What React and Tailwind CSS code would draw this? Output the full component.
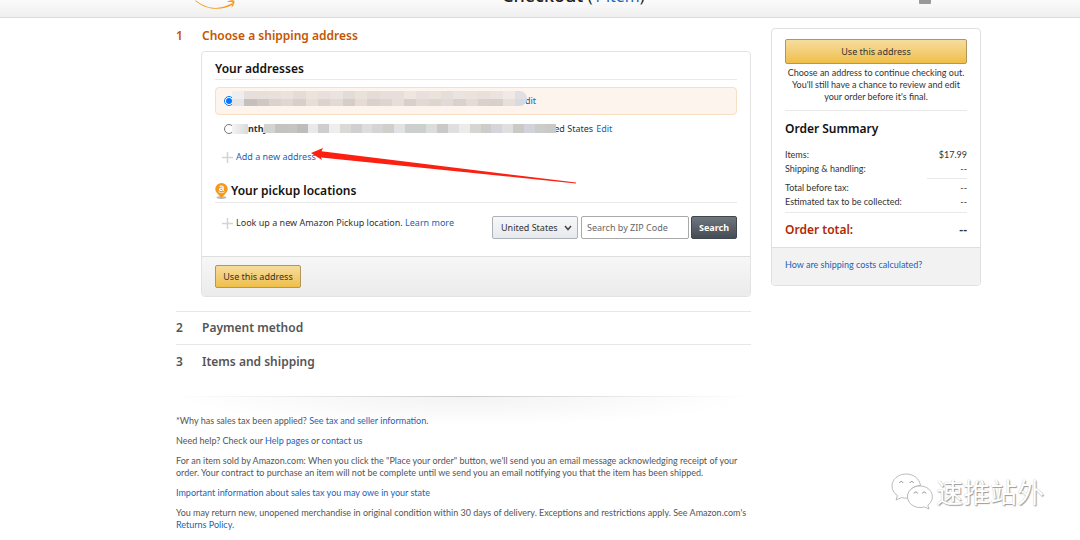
import React, { useState } from 'react';

const selectedMask = [
  ['#efeeee', '#e6dfdb', '#e6dfda', '#e7e0db', '#ebe2dd', '#e4dcd7', '#ece3dd', '#e8e0dc', '#eae3df', '#e2dcd9', '#e9e2db', '#e4dcd7', '#e8dfda', '#e6dfdc', '#efe7df', '#e7e0dc', '#e9e3dc', '#e5deda', '#e9e4dd', '#ece2dd', '#e7e1da', '#eae3df', '#f0e9e4', '#e0e0e4'],
  ['#e5e5e7', '#c6c0bd', '#cfc7c4', '#dbd2cd', '#e0d7d1', '#d8cecb', '#e7ded8', '#ddd2ce', '#e3dad4', '#d6cdc9', '#e6dcd5', '#dad1cc', '#ded4d0', '#e7ded8', '#d9cfcb', '#e2d8d4', '#ddd6cf', '#e2dad6', '#dad0cd', '#e3dbd4', '#dcd0cd', '#d8d0cd', '#e8dfda', '#d9dae0'],
];

const otherMask = [
  ['#d3d3d2', '#c3c3c0', '#c4c5c1', '#bdbdbb', '#e9e9e9', '#cdcecd', '#eeeeee', '#dad9d6', '#d0cfd1', '#dddddb', '#d4d5d7', '#cfcfcb', '#e2e1e3', '#cbd0cd', '#cad0cc', '#dbdddd', '#c9c9c8', '#dfdfe0', '#ebebeb', '#d5d5d2', '#cccdc9', '#d4d4da', '#dfdfdf', '#c9cac5', '#d2d3da', '#cacdca', '#c8cac8'],
];

function Mosaic({ rows, className }) {
  return (
    <div aria-hidden="true" className={`flex flex-col overflow-hidden ${className}`}>
      {rows.map((row, i) => (
        <div key={i} className="flex flex-1">
          {row.map((color, j) => (
            <span key={j} className="flex-1" style={{ backgroundColor: color }} />
          ))}
        </div>
      ))}
    </div>
  );
}

function Link({ children, className = '' }) {
  return (
    <a href="#" className={`text-[#2162b8] hover:underline ${className}`}>{children}</a>
  );
}

function PlusIcon() {
  return (
    <svg viewBox="0 0 11 11" className="w-[11px] h-[11px] shrink-0" fill="none" stroke="#d4d4d4" strokeWidth="1.5">
      <path d="M5.5 0v11M0 5.5h11" />
    </svg>
  );
}

function PinIcon() {
  return (
    <svg viewBox="0 0 13 16" className="w-[13px] h-4 shrink-0">
      <ellipse cx="6.5" cy="14.6" rx="5" ry="1.3" fill="#b9b9b9" />
      <path d="M6.500 0A6.200 6.200 0 0 0 .3 6.200C.3 9.500 4 11.500 6.500 15.200 9 11.500 12.700 9.500 12.700 6.200A6.200 6.200 0 0 0 6.500 0z" fill="#f39a1e" />
      <path d="M4.700 3.700c.5-1 3.500-1.200 3.500.5v2.500c0 .5.3.7.5.9M8.200 5.100C6 5 4.500 5.400 4.500 6.500c0 1.500 3 1.400 3.700-.4" fill="none" stroke="#fff" strokeWidth="1.1" />
      <path d="M3.300 8.700c2 1.400 4.500 1.300 6.400.1" fill="none" stroke="#fff" strokeWidth=".7" />
    </svg>
  );
}

function GoldButton({ className = '' }) {
  return (
    <button
      type="button"
      className={`rounded-[2px] border border-[#b3965a] bg-linear-to-b from-[#f6dc9d] to-[#efbf46] font-['Noto_Sans',sans-serif] text-[9px] text-[#333] ${className}`}
    >
      Use this address
    </button>
  );
}

function Header() {
  return (
    <header className="flex h-[18px] items-end overflow-hidden border-b border-[#dcdcdc] bg-linear-to-b from-[#fbfbfb] to-[#efefef] pl-[176px] pr-[99px]">
      <svg viewBox="0 0 42 12" className="ml-[19px] mb-2 h-3 w-[42px] shrink-0">
        <path d="M1 3.500C12 12.500 25 13 36.500 6.600c1-.5 1.800.5.9 1.200C27 14 11 13.200.7 4.200c-.5-.6-.2-1.100.3-.7z" fill="#f79b1c" />
        <path d="M32.500 4.500c2.500-1.400 6-1.600 6.700-.8.700.9-.2 4.500-2.300 6.500-.4.300-.7.100-.5-.3.500-1.300 1.500-3.800 1-4.400-.5-.6-3-.5-4.500-.4-.5 0-.7-.3-.4-.6z" fill="#f79b1c" />
      </svg>
      <h1 className="ml-[265px] mb-[9px] whitespace-nowrap text-[18px] font-medium leading-6 text-[#222]">
        Checkout <span className="text-[16px] font-normal">(<Link>1 item</Link>)</span>
      </h1>
      <span className="mb-[13px] ml-auto mr-[50px] h-3 w-3 rounded-[1px] bg-[#999]" />
    </header>
  );
}

function AddressPanel() {
  const [picked, setPicked] = useState('first');

  return (
    <section className="ml-[25px] mt-[6px] rounded-[4px] border border-[#e3e3e3]">
      <div className="px-[13px] pt-2">
        <h3 className="border-b border-[#e9e9e9] pb-[2px] text-[12px] font-semibold leading-[17px] text-[#111]">Your addresses</h3>

        <label className="mt-[7px] flex h-7 items-center rounded-[4px] border border-[#f8dfc4] bg-[#fcf4ed] pl-2 text-[9px]">
          <input
            type="radio"
            name="address"
            aria-label="First address"
            checked={picked === 'first'}
            onChange={() => setPicked('first')}
            className="h-[10px] w-[10px] shrink-0"
          />
          <Mosaic rows={selectedMask} className="relative z-10 -ml-[2px] -mr-[7px] mt-[3px] h-[15px] w-[295px] self-start rounded-r-lg" />
          <Link>Edit</Link>
        </label>

        <label className="flex h-[27px] items-center pl-[9px] text-[9px] text-[#333]">
          <input
            type="radio"
            name="address"
            aria-label="Second address"
            checked={picked === 'second'}
            onChange={() => setPicked('second')}
            className="h-[10px] w-[10px] shrink-0"
          />
          <span className="relative z-10 -ml-[2px] h-[10px] w-4 bg-linear-to-r from-[#f4f4f4] to-[#dadada]" />
          <span className="font-bold">nthj</span>
          <Mosaic rows={otherMask} className="relative z-10 -ml-[2px] -mr-[2px] h-[9px] w-[292px]" />
          <span className="mr-[3px]">ed States</span>
          <Link>Edit</Link>
        </label>

        <div className="relative mt-2 flex h-[14px] items-center gap-[3px] pl-[7px] text-[9px]">
          <PlusIcon />
          <Link>Add a new address</Link>
          <svg viewBox="0 0 266 40" className="pointer-events-none absolute left-[96px] -top-[2px] h-10 w-[266px]">
            <path d="M0 5 12 0 10.500 3.200 265 34.500 265 35.500 10 9.500 11 12z" fill="#fb2012" />
          </svg>
        </div>

        <h3 className="mt-[17px] flex items-center gap-[3px] border-b border-[#e9e9e9] pb-[2px] text-[12px] font-semibold leading-[19px] text-[#111]">
          <PinIcon />
          Your pickup locations
        </h3>

        <form onSubmit={e => e.preventDefault()} className="mt-[13px] flex h-[40px] items-start text-[9px] text-[#333]">
          <div className="flex h-[14px] items-center gap-[3px] pl-[7px]">
            <PlusIcon />
            <span>Look up a new Amazon Pickup location. <Link>Learn more</Link></span>
          </div>
          <div className="relative ml-auto">
            <select
              aria-label="Country"
              className="h-[23px] w-[86px] appearance-none rounded-[2px] border border-[#adb1b8] bg-linear-to-b from-[#f7f8fa] to-[#e7e9ec] pl-2 text-[9px] text-[#333]"
            >
              <option>United States</option>
            </select>
            <svg viewBox="0 0 8 6" className="pointer-events-none absolute right-[6px] top-[9px] h-[6px] w-2" fill="none" stroke="#444" strokeWidth="1.500">
              <path d="M1 1l3 3.500L7 1" />
            </svg>
          </div>
          <input
            type="text"
            aria-label="ZIP Code"
            placeholder="Search by ZIP Code"
            className="ml-[3px] h-[23px] w-[108px] rounded-[2px] border border-[#a9a9a9] bg-white px-[5px] text-[9px] placeholder:text-[#666]"
          />
          <button type="submit" className="ml-[2px] h-[23px] w-[46px] rounded-[2px] border border-[#40464e] bg-linear-to-b from-[#6f767e] to-[#444c55] text-[9px] font-bold text-white">
            Search
          </button>
        </form>
      </div>

      <div className="rounded-b-[4px] border-t border-[#dedede] bg-linear-to-b from-[#f7f7f7] to-[#ebebeb] px-[13px] py-2">
        <GoldButton className="block h-[23px] w-[86px]" />
      </div>
    </section>
  );
}

function Step({ number, title }) {
  return (
    <div className="flex h-[33px] items-center text-[12px] font-semibold text-[#555]">
      <span className="w-[26px]">{number}</span>
      <h2>{title}</h2>
    </div>
  );
}

function Legal() {
  return (
    <footer className="flex flex-col gap-2 pt-[18px] font-[Lato,sans-serif] text-[9px] leading-3 text-[#555]">
      <p>*Why has sales tax been applied? <Link>See tax and seller information.</Link></p>
      <p>Need help? Check our <Link>Help pages</Link> or <Link>contact us</Link></p>
      <p>
        For an item sold by Amazon.com: When you click the "Place your order" button, we'll send you an email message acknowledging receipt of your
        order. Your contract to purchase an item will not be complete until we send you an email notifying you that the item has been shipped.
      </p>
      <p><Link>Important information about sales tax you may owe in your state</Link></p>
      <p>
        You may return new, unopened merchandise in original condition within 30 days of delivery. Exceptions and restrictions apply. See Amazon.com's{' '}
        <Link>Returns Policy.</Link>
      </p>
    </footer>
  );
}

function Row({ label, value }) {
  return (
    <div className="flex h-[14px] items-center justify-between">
      <dt>{label}</dt>
      <dd>{value}</dd>
    </div>
  );
}

function OrderSummary() {
  return (
    <aside className="mt-[10px] w-[210px] shrink-0 rounded-[4px] border border-[#e0e0e0] font-[Lato,sans-serif] text-[9px] text-[#333]">
      <div className="px-[13px] pt-[10px]">
        <GoldButton className="block h-[25px] w-full" />
        <p className="mt-[3px] border-b border-[#e9e9e9] pb-[7px] text-center leading-3">
          Choose an address to continue checking out. You'll still have a chance to review and edit your order before it's final.
        </p>
        <h3 className="mt-[9px] font-['Noto_Sans',sans-serif] text-[12px] font-semibold leading-[18px] text-[#111]">Order Summary</h3>
        <dl className="mt-[10px]">
          <Row label="Items:" value="$17.99" />
          <Row label="Shipping & handling:" value="--" />
          <div className="my-[2px] ml-auto w-10 border-t border-[#e9e9e9]" />
          <Row label="Total before tax:" value="--" />
          <Row label="Estimated tax to be collected:" value="--" />
          <div className="mt-[3px] flex h-[35px] items-center justify-between border-t border-[#e9e9e9] font-['Noto_Sans',sans-serif] text-[12px] font-semibold">
            <dt className="text-[#b12704]">Order total:</dt>
            <dd>--</dd>
          </div>
        </dl>
      </div>
      <div className="flex h-[38px] items-center rounded-b-[4px] border-t border-[#dedede] bg-[#f2f2f2] px-[13px] pb-1">
        <Link>How are shipping costs calculated?</Link>
      </div>
    </aside>
  );
}

function Watermark() {
  return (
    <div className="pointer-events-none absolute right-[36px] top-[473px] flex items-center gap-[3px]">
      <svg viewBox="0 0 42 38" className="h-[38px] w-[42px]" fill="#fff" stroke="#aaa" strokeWidth=".8">
        <path d="M15 1C7 1 1 6.500 1 13c0 4 2 7.200 5.500 9.500L5 27l5.500-2.500c2 .6 4 .8 6 .7 0-7 5-12.500 13-12.700C28.500 5.500 22.500 1 15 1z" />
        <path d="M29 13c-7 0-12.500 4.800-12.500 10.700S22 34.500 29 34.500c1.500 0 3-.2 4.300-.6L38 36l-1.200-3.800c2.800-2 4.600-5 4.600-8.400C41.400 17.800 36 13 29 13z" />
        <g fill="none" stroke="#888" strokeWidth="1">
          <path d="M8.500 10c.5-2 3-2 3.500 0M19 10c.5-2 3-2 3.500 0M23 20.500c.5-2 3-2 3.500 0M31.500 20.500c.5-2 3-2 3.500 0" />
        </g>
      </svg>
      <span className="font-['Noto_Sans_CJK_SC',sans-serif] text-[27px] leading-[38px] text-white [text-shadow:1px_1px_1px_#999,0_0_1px_#bbb]">速推站外</span>
    </div>
  );
}

export default function App() {
  return (
    <div className="relative min-h-screen bg-white font-['Noto_Sans',sans-serif]">
      <Header />
      <div className="flex items-start gap-5 pl-[176px] pr-[99px]">
        <main className="min-w-0 flex-1">
          <div className="flex pt-[9px] text-[12px] font-semibold leading-[18px] text-[#c45500]">
            <span className="w-[26px]">1</span>
            <h2>Choose a shipping address</h2>
          </div>
          <AddressPanel />
          <div className="mt-[14px] divide-y divide-[#e7e7e7] border-t border-[#e7e7e7]">
            <Step number="2" title="Payment method" />
            <Step number="3" title="Items and shipping" />
          </div>
          <div className="mt-[18px] h-px bg-linear-to-r from-transparent via-[#cccccc] to-transparent" />
          <div className="bg-[radial-gradient(ellipse_50%_28px_at_top,#f3f3f3,transparent)]">
            <Legal />
          </div>
        </main>
        <OrderSummary />
      </div>
      <Watermark />
    </div>
  );
}
